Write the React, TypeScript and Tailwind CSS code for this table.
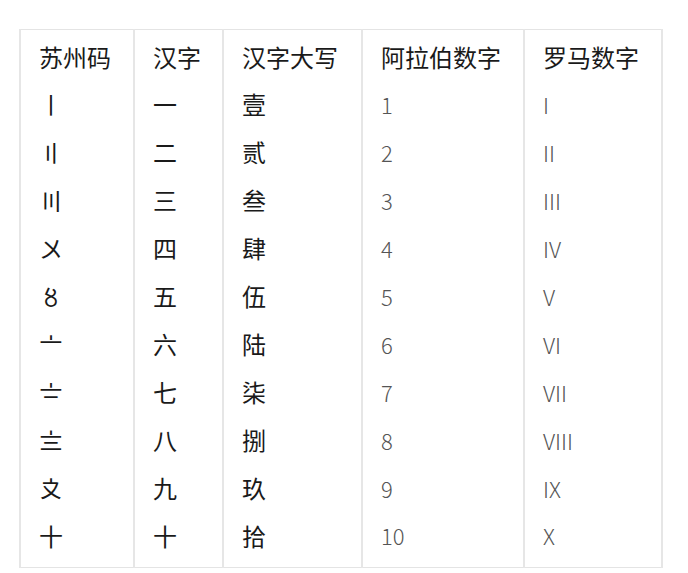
import React from "react";

const rows = [
  ["〡", "一", "壹", "1", "I"],
  ["〢", "二", "贰", "2", "II"],
  ["〣", "三", "叁", "3", "III"],
  ["〤", "四", "肆", "4", "IV"],
  ["〥", "五", "伍", "5", "V"],
  ["〦", "六", "陆", "6", "VI"],
  ["〧", "七", "柒", "7", "VII"],
  ["〨", "八", "捌", "8", "VIII"],
  ["〩", "九", "玖", "9", "IX"],
  ["十", "十", "拾", "10", "X"],
];

const headers = ["苏州码", "汉字", "汉字大写", "阿拉伯数字", "罗马数字"];

export default function App() {
  return (
    <div className="w-[688px] h-[573px] bg-white pt-[29px] pl-[19px] font-['Noto_Sans_CJK_SC',sans-serif]">
      <table className="border-collapse border border-[#e4e4e4] w-[642px] table-fixed">
        <colgroup>
          <col className="w-[114px]" />
          <col className="w-[89px]" />
          <col className="w-[139px]" />
          <col className="w-[162px]" />
          <col className="w-[138px]" />
        </colgroup>
        <thead>
          <tr className="h-[50px]">
            {headers.map((h) => (
              <th
                key={h}
                className="border-x-2 border-[#e6e6e6] pl-[18px] pt-[4px] text-left align-middle font-normal text-[24px] text-[#1a1a1a] leading-none"
              >
                {h}
              </th>
            ))}
          </tr>
        </thead>
        <tbody>
          {rows.map((r, i) => (
            <tr key={i} className={i === rows.length - 1 ? "h-[56px]" : "h-[48px]"}>
              {r.map((c, j) => (
                <td
                  key={j}
                  className={
                    "border-x-2 border-[#e6e6e6] pl-[18px] leading-none " +
                    (i === rows.length - 1 ? "align-top pt-[12px] " : "align-middle ") +
                    (j === 0
                      ? "text-[24px] text-[#1a1a1a] font-['Noto_Sans_CJK_JP',sans-serif]"
                      : j >= 3
                      ? "text-[22px] text-[#555] font-light"
                      : "text-[24px] text-[#1a1a1a]")
                  }
                >
                  {c}
                </td>
              ))}
            </tr>
          ))}
        </tbody>
      </table>
    </div>
  );
}
